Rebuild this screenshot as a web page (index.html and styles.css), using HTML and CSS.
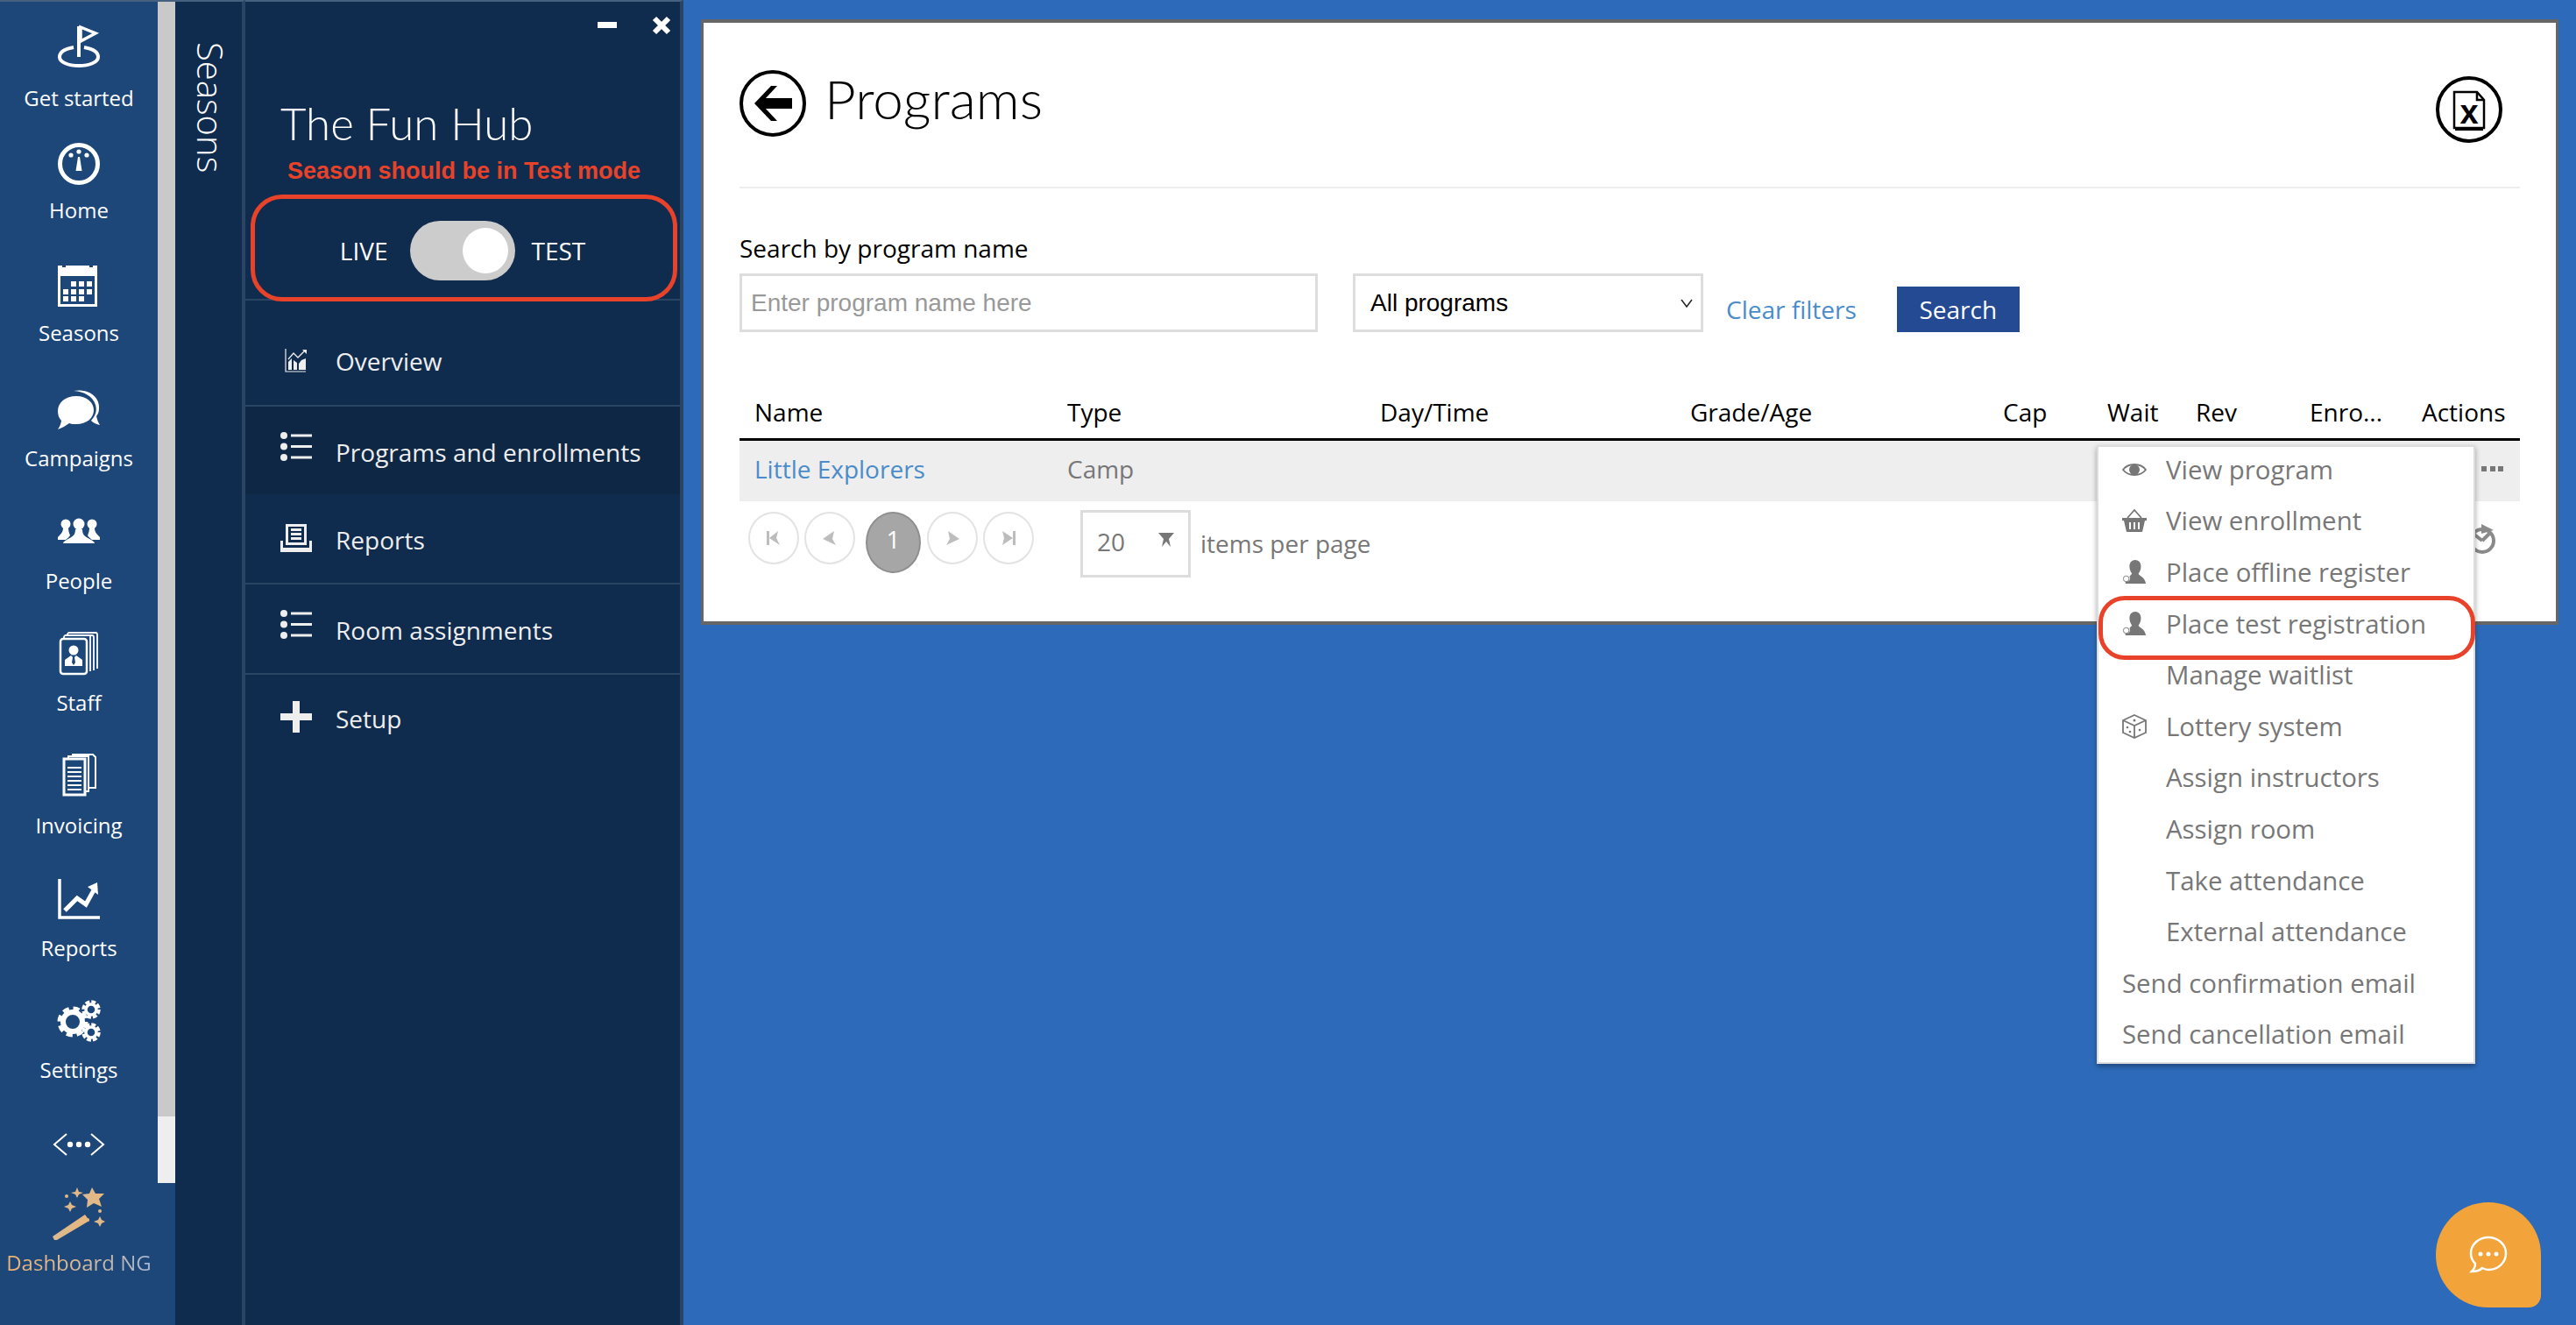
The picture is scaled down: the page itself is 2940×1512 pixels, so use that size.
FILE: index.html
```html
<!DOCTYPE html>
<html lang="en">
<head>
<meta charset="utf-8">
<title>Programs</title>
<link rel="stylesheet" href="styles.css">
</head>
<body>
<div class="app">
  <aside class="rail">
    <nav class="rail-col">
      <a class="rail-item h128">
        <svg class="rail-icon" viewBox="0 0 60 70"><path d="M30 3V38" stroke-width="4"/><path d="M32 4L49 11L32 20Z" stroke-width="3.5"/><path d="M24 27C13 29 8 33 8 38C8 44 18 48 30 48C42 48 52 44 52 38C52 33 47 29 36 27" stroke-width="4"/></svg>
        <span class="rail-label">Get started</span>
      </a>
      <a class="rail-item h140">
        <svg class="rail-icon" viewBox="0 0 60 70"><ellipse cx="30" cy="32" rx="21.5" ry="21.5" stroke-width="5"/><g class="fill"><circle cx="21" cy="22" r="2.6"/><circle cx="30" cy="18" r="2.6"/><circle cx="39" cy="22" r="2.6"/><path d="M29 24H31L33.5 40H26.500Z"/></g></svg>
        <span class="rail-label">Home</span>
      </a>
      <a class="rail-item h143">
        <svg class="rail-icon" viewBox="0 0 60 70"><g class="fill"><path d="M6 8H11V10H15V8H42V10H46V8H51V55H6ZM9 20V52H48V20Z" fill-rule="evenodd"/><path d="M21 26h6v6h-6zM30 26h6v6h-6zM39 26h6v6h-6zM12 35h6v6h-6zM21 35h6v6h-6zM30 35h6v6h-6zM39 35h6v6h-6zM12 43h6v6h-6zM21 43h6v6h-6zM30 43h6v6h-6z"/></g></svg>
        <span class="rail-label">Seasons</span>
      </a>
      <a class="rail-item h140">
        <svg class="rail-icon" viewBox="0 0 60 70"><g class="fill"><path d="M27 14C39 14 47 21 47 30C47 39 39 46 27 46C24 46 21 46 19 45C15 48 11 50 6 52C8 49 9.500 46 10 42C7 39 6 35 6 31C6 21 15 14 27 14Z"/><path d="M24 8C40 5 54 14 53 28C53 32 52 34 50 37C51 41 52 44 54 47C50 46 47 45 44 42C49 36 51 31 49 24C46 14 36 9 24 8Z"/></g></svg>
        <span class="rail-label">Campaigns</span>
      </a>
      <a class="rail-item h139">
        <svg class="rail-icon" viewBox="0 0 60 70"><g class="fill"><circle cx="15" cy="20" r="5.500"/><path d="M12 24C12 28 11 30 6 35V38H15C17 36 19 35 20 33C19 30 18 28 18 24Z"/><circle cx="45" cy="20" r="5.500"/><path d="M42 24C42 28 41 30 40 33C41 35 43 36 45 38H54V35C49 30 48 28 48 24Z"/><circle cx="30" cy="20" r="6.500"/><path d="M26 26C26 32 24 34 16 38C14 39 12 41 12 42H48C48 41 46 39 44 38C36 34 34 32 34 26Z"/></g></svg>
        <span class="rail-label">People</span>
      </a>
      <a class="rail-item h140">
        <svg class="rail-icon" viewBox="0 0 60 70"><rect x="9" y="12" width="30" height="40" rx="3" stroke-width="2.500"/><path d="M17 8V7C17 6 18 5 19 5H49C50 5 51 6 51 7V46" stroke-width="1.800"/><path d="M13 12V10C13 9 14 8 15 8H45C46 8 47 9 47 10V48" stroke-width="1.800"/><path d="M43 9V49" stroke-width="1.800"/><g class="fill"><circle cx="24" cy="25" r="5.500"/><path d="M21 31L14 36V43H34V36L27 31L25 33L26 39L24 42L22 39L23 33Z"/></g></svg>
        <span class="rail-label">Staff</span>
      </a>
      <a class="rail-item h140">
        <svg class="rail-icon" viewBox="0 0 60 70"><path d="M13 9H37V50H13Z" stroke-width="3"/><path d="M18 8V6H41V46H38" stroke-width="2"/><path d="M23 5V4H46L49 7V42H42" stroke-width="2"/><path d="M17 19H33M17 24H33M17 29H33M17 34H33M17 39H33M17 44H33" stroke-width="2"/></svg>
        <span class="rail-label">Invoicing</span>
      </a>
      <a class="rail-item h139">
        <svg class="rail-icon" viewBox="0 0 60 70"><path d="M8 6V50H54" stroke-width="3.500"/><path d="M14 42L28 28L38 35L48 17" stroke-width="5"/><path class="fill" d="M40 15L51 10L52 24Z"/></svg>
        <span class="rail-label">Reports</span>
      </a>
      <a class="rail-item h140">
        <svg class="rail-icon" viewBox="0 0 60 70"><circle cx="23" cy="30" r="11" stroke-width="6"/><circle cx="23" cy="30" r="15" stroke-width="5" stroke-dasharray="7 4.800"/><circle cx="44" cy="16" r="6" stroke-width="3.500"/><circle cx="44" cy="16" r="9" stroke-width="3.500" stroke-dasharray="5 2.070"/><circle cx="44" cy="42" r="6" stroke-width="3.500"/><circle cx="44" cy="42" r="9" stroke-width="3.500" stroke-dasharray="5 2.070"/></svg>
        <span class="rail-label">Settings</span>
      </a>
      <svg class="rail-more" viewBox="0 0 60 26"><path d="M16 1L2 13L16 25M44 1L58 13L44 25" stroke-width="2"/><g class="fill"><circle cx="20" cy="13" r="3.200"/><circle cx="30" cy="13" r="3.200"/><circle cx="40" cy="13" r="3.200"/></g></svg>
      <a class="rail-dash">
        <svg class="dash-icon" viewBox="0 0 60 60"><defs><linearGradient id="wand" x1="0" x2="1" y1="0" y2="0"><stop offset="0" stop-color="#d9ba92"/><stop offset="1" stop-color="#eab77c"/></linearGradient></defs><g fill="url(#wand)"><path d="M0 56L2 60H5L42 38L37 31Z"/><path d="M45 0L49 7L59 7L53 13L56 22L47 18L39 23L40 14L34 8L42 7Z"/><path d="M28 0L30 5L35 6L30 8L28 12L26 8L21 6L26 5Z"/><path d="M20 16L22 20L27 22L22 24L20 28L18 24L13 22L18 20Z"/><path d="M54 33L56 37L60 39L56 41L54 45L52 41L47 39L52 37Z"/><circle cx="16" cy="10" r="2"/><circle cx="54" cy="27" r="2"/><circle cx="40" cy="37" r="2"/></g></svg>
        <span class="dash-label">Dashboard NG</span>
      </a>
    </nav>
    <div class="scrollbar"><div class="scroll-track"></div><div class="scroll-thumb"></div></div>
  </aside>

  <div class="strip"><span class="strip-title">Seasons</span></div>

  <section class="panel">
    <div class="window-controls">
      <svg class="win-min" viewBox="0 0 22 22"><rect y="7" width="22" height="7"/></svg>
      <svg class="win-close" viewBox="0 0 22 22"><path d="M3 3L19 19M19 3L3 19"/></svg>
    </div>
    <h2 class="panel-title">The Fun Hub</h2>
    <p class="panel-warning">Season should be in Test mode</p>
    <div class="mode-box">
      <span class="mode-live">LIVE</span>
      <span class="toggle"><span class="knob"></span></span>
      <span class="mode-test">TEST</span>
    </div>
    <ul class="panel-menu">
      <li class="panel-row panel-row-first">
        <svg class="panel-icon" viewBox="0 0 36 40"><path d="M6 9V35H29" class="line" stroke-width="1.200"/><path d="M9 33V24L13 20V33ZM15 33V22L19 25V33ZM21 33V26L24 22L29 20V33Z" class="solid"/><path d="M9 21L15 14L20 19L28 11" class="line" stroke-width="1.300"/><path d="M25 10H30V15Z" class="solid"/></svg>
        <span>Overview</span>
      </li>
      <li class="panel-row panel-row-active">
        <svg class="panel-icon" viewBox="0 0 36 40"><g class="solid"><circle cx="4" cy="4" r="4"/><circle cx="4" cy="16.500" r="4"/><circle cx="4" cy="29" r="4"/><rect x="12" y="2.500" width="24" height="3"/><rect x="12" y="15" width="24" height="3"/><rect x="12" y="27.500" width="24" height="3"/></g></svg>
        <span>Programs and enrollments</span>
      </li>
      <li class="panel-row panel-row-line">
        <svg class="panel-icon" viewBox="0 0 36 40"><path class="solid" fill-rule="evenodd" d="M6 5H30V29H6ZM9 8V26H27V8ZM12 10H24V13H12ZM12 15H24V18H12ZM12 20H24V23H12ZM0 24H3V32H33V24H36V37H0Z"/></svg>
        <span>Reports</span>
      </li>
      <li class="panel-row panel-row-line">
        <svg class="panel-icon" viewBox="0 0 36 40"><g class="solid"><circle cx="4" cy="4" r="4"/><circle cx="4" cy="16.500" r="4"/><circle cx="4" cy="29" r="4"/><rect x="12" y="2.500" width="24" height="3"/><rect x="12" y="15" width="24" height="3"/><rect x="12" y="27.500" width="24" height="3"/></g></svg>
        <span>Room assignments</span>
      </li>
      <li class="panel-row panel-row-last">
        <svg class="panel-icon" viewBox="0 0 36 40"><path class="solid" d="M14 3H22V17H36V25H22V39H14V25H0V17H14Z"/></svg>
        <span>Setup</span>
      </li>
    </ul>
  </section>

  <main class="main">
    <div class="card">
      <header class="card-head">
        <svg class="back-icon" viewBox="0 0 76 76"><circle cx="38" cy="38" r="36" class="ring"/><path d="M17 38L36 18H43L30 32H60V44H30L43 58H36Z" class="ink"/></svg>
        <h1 class="card-title">Programs</h1>
        <svg class="excel-icon" viewBox="0 0 76 76"><circle cx="38" cy="38" r="36" class="ring"/><path d="M21 18H47L55 27V59H21Z" class="thin"/><path d="M47 18V27H55" class="thin"/><path d="M22 60H54" class="thick"/><text x="38" y="54" class="excel-x">x</text></svg>
      </header>
      <div class="filters">
        <div class="field">
          <label class="field-label">Search by program name</label>
          <input class="text-input" type="text" placeholder="Enter program name here">
        </div>
        <div class="select-box">
          <span>All programs</span>
          <svg class="chev" viewBox="0 0 14 10"><path d="M1 1L7 9L13 1"/></svg>
        </div>
        <a class="clear-link">Clear filters</a>
        <button class="search-btn" type="button">Search</button>
      </div>
      <div class="t-row t-head">
        <span>Name</span><span>Type</span><span>Day/Time</span><span>Grade/Age</span><span>Cap</span><span>Wait</span><span>Rev</span><span>Enro...</span><span>Actions</span>
      </div>
      <div class="t-row t-body">
        <a class="t-link">Little Explorers</a><span>Camp</span><span></span><span></span><span></span><span></span><span></span><span></span>
        <svg class="dots" viewBox="0 0 25 6"><path d="M0 0h6v6H0zM10 0h6v6h-6zM19 0h6v6h-6z"/></svg>
      </div>
      <div class="pager">
        <span class="page-btn"><svg viewBox="0 0 20 20"><path d="M2 2H5V18H2ZM5 10L15 2L13 10L17 18Z"/></svg></span>
        <span class="page-btn"><svg viewBox="0 0 20 20"><path d="M2 11L15 2L13 11L17 18Z"/></svg></span>
        <span class="page-current">1</span>
        <span class="page-btn"><svg viewBox="0 0 20 20"><path d="M18 11L5 2L7 11L3 18Z"/></svg></span>
        <span class="page-btn"><svg viewBox="0 0 20 20"><path d="M15 2H18V18H15ZM15 10L3 2L5 10L3 18Z"/></svg></span>
        <div class="per-page"><span>20</span><svg viewBox="0 0 18 18"><path d="M0 1H18L12 8L14 17L9 11L4 17L6 8Z"/></svg></div>
        <span class="per-label">items per page</span>
        <svg class="refresh" viewBox="0 0 34 34"><circle cx="17" cy="19" r="13"/><path d="M17 19L25 11M17 19L8 12"/><path class="refresh-tip" d="M16 0L30 7L16 11Z"/></svg>
      </div>

      <ul class="actions-menu">
        <li class="act"><svg class="act-icon" viewBox="0 0 28 28"><path class="o" d="M1 14C7 6 21 6 27 14C21 22 7 22 1 14Z"/><circle class="s" cx="14" cy="14" r="6"/></svg><span>View program</span></li>
        <li class="act"><svg class="act-icon" viewBox="0 0 28 28"><path class="s" d="M0 11H28V14H26L23 27H5L2 14H0ZM8 16V24H10V16ZM13 16V24H15V16ZM18 16V24H20V16Z" fill-rule="evenodd"/><path class="o" d="M6 11L14 2L22 11"/></svg><span>View enrollment</span></li>
        <li class="act"><svg class="act-icon" viewBox="0 0 28 30"><path class="s" d="M15 0C20 0 22 4 22 8C22 12 20 15 19 17C19 19 27 21 28 29H3V26H7A5 5 0 0 0 8 20L11 17C10 15 8 12 8 8C8 4 10 0 15 0Z"/><circle class="o1" cx="4" cy="23" r="3.500"/></svg><span>Place offline register</span></li>
        <li class="act act-mark"><svg class="act-icon" viewBox="0 0 28 30"><path class="s" d="M15 0C20 0 22 4 22 8C22 12 20 15 19 17C19 19 27 21 28 29H3V26H7A5 5 0 0 0 8 20L11 17C10 15 8 12 8 8C8 4 10 0 15 0Z"/><circle class="o1" cx="4" cy="23" r="3.500"/></svg><span>Place test registration</span></li>
        <li class="act"><span class="act-slot"></span><span>Manage waitlist</span></li>
        <li class="act"><svg class="act-icon" viewBox="0 0 28 28"><path class="o" d="M14 1L27 7V21L14 27L1 21V7ZM1 7L14 13L27 7M14 13V27"/><circle class="s" cx="14" cy="7" r="1.500"/><circle class="s" cx="6" cy="15" r="1.300"/><circle class="s" cx="9" cy="20" r="1.300"/><circle class="s" cx="20" cy="18" r="1.300"/></svg><span>Lottery system</span></li>
        <li class="act"><span class="act-slot"></span><span>Assign instructors</span></li>
        <li class="act"><span class="act-slot"></span><span>Assign room</span></li>
        <li class="act"><span class="act-slot"></span><span>Take attendance</span></li>
        <li class="act"><span class="act-slot"></span><span>External attendance</span></li>
        <li class="act"><span>Send confirmation email</span></li>
        <li class="act"><span>Send cancellation email</span></li>
      </ul>
    </div>
  </main>
</div>
<button class="chat" type="button" aria-label="Chat">
  <svg viewBox="0 0 44 44"><path d="M22 2C33 2 42 10 42 20C42 31 33 39 22 39C19 39 17 38 15 37C12 40 8 41 3 41C6 38 7 35 7 32C4 29 2 25 2 20C2 10 11 2 22 2Z"/><g><circle cx="13" cy="21" r="2.500"/><circle cx="22" cy="21" r="2.500"/><circle cx="31" cy="21" r="2.500"/></g></svg>
</button>
</body>
</html>
```

FILE: styles.css
```css
* { box-sizing: border-box; }
html, body { margin: 0; height: 1512px; overflow: hidden; }
body { font-family: "Open Sans", "Liberation Sans", sans-serif; background: #2d6bba; }
ul { list-style: none; margin: 0; padding: 0; }
h1, h2, p { margin: 0; font-weight: normal; }

.app { display: flex; height: 1512px; }

/* icon rail */
.rail { width: 200px; flex: none; display: flex; background: #1d4679; border-top: 2px solid #46607f; }
.rail-col { width: 180px; flex: none; display: flex; flex-direction: column; align-items: center; padding-top: 25px; }
.rail-item { width: 180px; display: flex; flex-direction: column; align-items: center; color: #fff; flex: none; }
.h128 { height: 128px; }
.h139 { height: 139px; }
.h140 { height: 140px; }
.h143 { height: 143px; }
.rail-icon { width: 60px; height: 70px; display: block; fill: none; stroke: #fff; }
.rail-icon .fill, .rail-more .fill { fill: #fff; stroke: none; }
.rail-label { font-size: 24px; line-height: 30px; }
.rail-more { width: 60px; height: 26px; margin-top: 17px; flex: none; fill: none; stroke: #fff; }
.rail-dash { display: flex; flex-direction: column; align-items: center; margin-top: 36px; }
.dash-icon { width: 60px; height: 60px; display: block; }
.dash-label { margin-top: 11px; font-size: 24px; line-height: 30px; white-space: nowrap;
  background: linear-gradient(90deg, #efb271 0%, #d9bb98 50%, #a3b5cf 100%);
  -webkit-background-clip: text; background-clip: text; color: transparent; }
.scrollbar { width: 20px; flex: none; display: flex; flex-direction: column; }
.scroll-track { height: 1272px; background: #c9c9c9; }
.scroll-thumb { height: 76px; background: #eeeeee; }

/* seasons strip */
.strip { width: 80px; flex: none; background: #0f2b4d; border-right: 4px solid #2a4464; border-top: 2px solid #46607f; padding: 46px 0 0 20px; }
.strip-title { display: block; writing-mode: vertical-rl; color: #fff; font-weight: 300; font-size: 40px; line-height: 40px; }

/* panel */
.panel { width: 500px; flex: none; background: #0f2b4d; border-right: 4px solid #2a4464; border-top: 2px solid #46607f; color: #fff; display: flex; flex-direction: column; }
.window-controls { display: flex; justify-content: flex-end; gap: 40px; padding: 16px 10px 0 0; }
.win-min, .win-close { width: 22px; height: 22px; display: block; }
.win-min { fill: #fff; }
.win-close { fill: none; stroke: #fff; stroke-width: 6; }
.panel-title { margin: 71px 0 0 40px; font-family: Lato, "Open Sans", sans-serif; font-weight: 300; font-size: 51px; line-height: 60px; }
.panel-warning { margin: 9px 0 0 48px; font-family: "Liberation Sans", Arial, sans-serif; font-weight: bold; font-size: 27px; line-height: 30px; color: #e8432a; white-space: nowrap; }
.mode-box { position: relative; z-index: 1; margin: 12px 0 -3px 6px; width: 487px; height: 122px; flex: none; border: 5px solid #e8432a; border-radius: 36px; display: flex; align-items: center; justify-content: center; padding: 6px 3px 0 0; font-size: 28px; }
.mode-live { margin-right: 26px; }
.mode-test { margin-left: 18px; }
.toggle { width: 120px; height: 68px; border-radius: 34px; background: #cccccc; display: flex; align-items: center; justify-content: flex-end; padding-right: 8px; }
.knob { width: 52px; height: 52px; border-radius: 50%; background: #fff; }
.panel-menu { border-top: 2px solid #2a4464; font-size: 28px; color: #eeeeee; }
.panel-row { display: flex; align-items: flex-start; padding: 32px 0 0 40px; height: 101px; line-height: 40px; }
.panel-row-first { height: 121px; padding-top: 49px; border-bottom: 2px solid #2a4464; }
.panel-row-active { background: #0e2745; height: 100px; }
.panel-row-line { height: 103px; border-bottom: 2px solid #2a4464; }
.panel-row-last { padding-top: 30px; }
.panel-icon { width: 36px; height: 40px; margin: -3px 27px 0 0; flex: none; }
.panel-icon .solid { fill: #eeeeee; }
.panel-icon .line { fill: none; stroke: #eeeeee; }

/* main */
.main { flex: 1; min-width: 0; padding: 22px 20px 0; }
.card { position: relative; height: 691px; background: #fff; border: solid #666666; border-width: 4px 3px; padding: 0 41px; }
.card-head { display: flex; align-items: flex-start; height: 187px; border-bottom: 2px solid #eeeeee; box-sizing: content-box; }
.back-icon { width: 76px; height: 76px; margin-top: 54px; flex: none; }
.ring { fill: none; stroke: #000; stroke-width: 4; }
.ink { fill: #000; }
.card-title { margin: 41px 0 0 21px; font-family: Lato, "Open Sans", sans-serif; font-weight: 300; font-size: 62px; line-height: 90px; color: #000; }
.excel-icon { width: 76px; height: 76px; margin: 61px 20px 0 auto; flex: none; }
.thin { fill: none; stroke: #000; stroke-width: 2.500; }
.thick { fill: none; stroke: #000; stroke-width: 4; }
.excel-x { font-family: "Liberation Sans", sans-serif; font-weight: bold; font-size: 38px; text-anchor: middle; fill: #000; }

.filters { display: flex; align-items: flex-end; margin-top: 48px; }
.field { display: flex; flex-direction: column; width: 660px; flex: none; }
.field-label { font-size: 28px; line-height: 40px; color: #000; margin-bottom: 9px; }
.text-input { width: 660px; height: 67px; border: 3px solid #dddddd; padding: 0 10px; font-family: "Liberation Sans", sans-serif; font-size: 28px; outline: none; background: #fff; }
.text-input::placeholder { color: #999999; opacity: 1; }
.select-box { width: 400px; height: 67px; flex: none; margin-left: 40px; border: 3px solid #dddddd; padding: 0 9px 0 17px; display: flex; align-items: center; justify-content: space-between; font-family: "Liberation Sans", sans-serif; font-size: 28px; color: #000; }
.chev { width: 14px; height: 10px; fill: none; stroke: #222; stroke-width: 1.500; }
.clear-link { margin-left: 26px; font-size: 28px; line-height: 52px; color: #4a8cc9; white-space: nowrap; }
.search-btn { margin-left: 46px; width: 140px; height: 52px; border: 0; background: #234a93; color: #fff; font-family: inherit; font-size: 28px; padding: 0; }

.t-row { display: grid; align-items: center; padding-left: 17px; }
.t-head { margin-top: 69px; height: 55px; border-bottom: 3px solid #000; font-size: 28px; line-height: 40px; color: #000; padding-bottom: 9px; grid-template-columns: 357px 357px 354px 357px 119px 101px 130px 128px 95px; }
.t-body { height: 69px; background: #eeeeee; font-size: 28px; line-height: 40px; color: #777777; padding-bottom: 6px; grid-template-columns: 357px 357px 354px 357px 119px 101px 130px 128px 93px; }
.t-link { color: #4a8cc9; }
.dots { width: 25px; height: 6px; fill: #777777; justify-self: end; grid-column: 9; }

.pager { display: flex; align-items: flex-start; padding: 10px 0 0 10px; }
.page-btn { width: 58px; height: 60px; flex: none; margin: 2px 6px 0 0; border: 2px solid #e3e3e3; border-radius: 50%; display: flex; align-items: center; justify-content: center; }
.page-btn svg { width: 20px; height: 20px; fill: #bdbdbd; }
.page-current { width: 63px; height: 70px; flex: none; margin: 2px 7px 0 6px; border: 2px solid #8f8f8f; border-radius: 50%; background: #a6a6a6; color: #fff; font-size: 28px; line-height: 58px; text-align: center; }
.per-page { width: 126px; height: 77px; flex: none; margin-left: 47px; border: 3px solid #dddddd; padding: 0 16px; display: flex; justify-content: space-between; font-size: 28px; line-height: 66px; color: #777777; }
.per-page svg { width: 18px; height: 18px; margin-top: 22px; fill: #777777; }
.per-label { margin: 18px 0 0 11px; font-size: 28px; line-height: 40px; color: #777777; }
.refresh { width: 34px; height: 34px; margin: 16px 26px 0 auto; flex: none; fill: none; stroke: #8a8a8a; stroke-width: 4; }
.refresh-tip { fill: #8a8a8a; stroke: none; }

.actions-menu { position: absolute; z-index: 2; top: 482px; right: 92px; width: 432px; height: 706px; background: #fff; border: 2px solid #dddddd; box-shadow: 0 3px 6px rgba(0,0,0,.35); font-size: 29.4px; color: #777777; }
.act { position: relative; display: flex; align-items: center; height: 58.6px; padding: 0 0 7px 27px; white-space: nowrap; }
.act-icon { width: 28px; height: 28px; flex: none; margin-right: 22px; }
.act-slot { width: 50px; flex: none; }
.act-icon .s { fill: #777777; }
.act-icon .o { fill: none; stroke: #777777; stroke-width: 1.800; }
.act-icon .o1 { fill: #fff; stroke: #777777; stroke-width: 1; }
.act-mark::after { content: ""; position: absolute; left: 0; right: -2px; top: -6px; height: 63px; border: 5px solid #e8432a; border-radius: 30px; }

/* chat */
.chat { position: absolute; left: 2780px; top: 1372px; width: 120px; height: 120px; padding: 0; border: 0; background: #f2a33a; border-radius: 50% 50% 14px 50%; display: flex; align-items: center; justify-content: center; }
.chat svg { width: 44px; height: 44px; fill: none; stroke: #fff; stroke-width: 2.500; }
.chat svg g { fill: #fff; stroke: none; }
```
